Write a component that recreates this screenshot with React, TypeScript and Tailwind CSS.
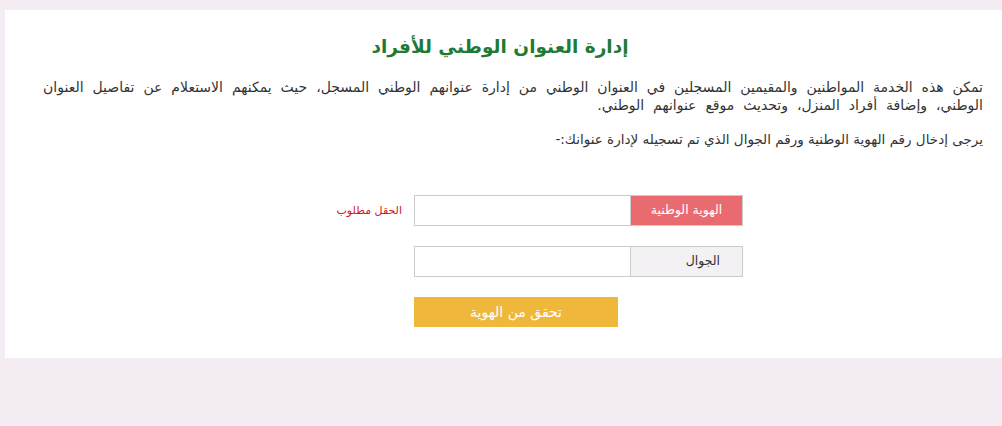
import React from 'react';

const App: React.FC = () => {
  return (
    <div className="min-h-[426px] w-[1002px] bg-[#f4eef4] pt-[10px] pl-[5px]" style={{ fontFamily: '"DejaVu Sans", sans-serif' }}>
      <div dir="rtl" className="h-[348px] bg-white pr-[19px] pl-[12px] pt-[24px]">
        <h1 className="text-center text-[18.5px] font-bold text-[#1f7a35] leading-[26px]">
          إدارة العنوان الوطني للأفراد
        </h1>
        <p className="mt-[18px] text-[14px] leading-[18px] text-[#333] [word-spacing:4.5px]">
          تمكن هذه الخدمة المواطنين والمقيمين المسجلين في العنوان الوطني من إدارة عنوانهم الوطني المسجل، حيث يمكنهم الاستعلام عن تفاصيل العنوان الوطني، وإضافة أفراد المنزل، وتحديث موقع عنوانهم الوطني.
        </p>
        <p className="mt-[16px] text-[13.5px] leading-[18px] text-[#333]">
          يرجى إدخال رقم الهوية الوطنية ورقم الجوال الذي تم تسجيله لإدارة عنوانك:-
        </p>

        <div className="mt-[47px] mr-[240px] flex items-start">
          <div className="flex w-[329px] flex-col gap-[20px]">
            <div className="flex h-[31px] border border-[#c9cdc9]">
              <div className="flex w-[111px] items-center justify-center bg-[#ea6b6f] text-[12.5px] text-white">
                الهوية الوطنية
              </div>
              <input className="flex-1 bg-white outline-none border-r border-[#c9cdc9]" />
            </div>
            <div className="flex h-[31px] border border-[#c9cdc9]">
              <div className="flex w-[111px] items-center pr-[22px] bg-[#f3f1f3] text-[12.5px] text-[#333]">
                الجوال
              </div>
              <input className="flex-1 bg-white outline-none border-r border-[#c9cdc9]" />
            </div>
            <div className="flex justify-end">
              <button className="h-[30px] w-[204px] bg-[#f0b83a] text-[14px] text-white">
                تحقق من الهوية
              </button>
            </div>
          </div>
          <span className="mr-[12px] mt-[8px] text-[11px] text-[#d0141e]">الحقل مطلوب</span>
        </div>
      </div>
    </div>
  );
};

export default App;
